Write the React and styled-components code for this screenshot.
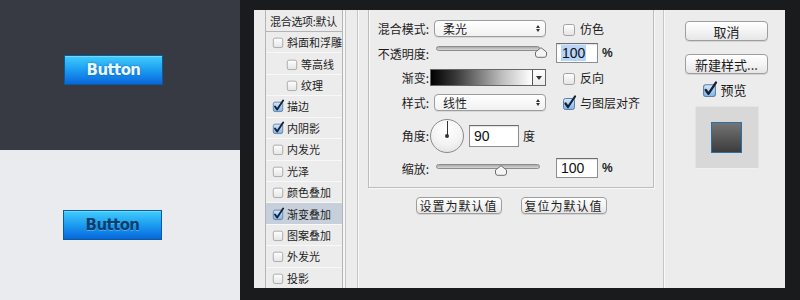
import React from 'react';
import styled, { createGlobalStyle } from 'styled-components';

const GlobalStyle = createGlobalStyle`
  html, body {
    margin: 0;
    padding: 0;
    background: #1a1b1d;
  }
  * {
    box-sizing: border-box;
  }
`;

const cjk = `"Noto Sans CJK SC", "Noto Sans", sans-serif`;

const Page = styled.div`
  width: 800px;
  height: 300px;
  display: flex;
  overflow: hidden;
  font-family: ${cjk};
  color: #1c1c1c;
`;

// left demo panels
const DemoColumn = styled.div`
  width: 240px;
  display: flex;
  flex-direction: column;
`;

const DemoHalf = styled.div`
  height: 150px;
  display: flex;
  align-items: flex-start;
  background: ${p => p.$bg};
  padding: ${p => p.$pad};
`;

const GlossButton = styled.div`
  width: 99px;
  height: 30px;
  display: flex;
  align-items: center;
  justify-content: center;
  border: 1px solid #0b5b9b;
  background: linear-gradient(to bottom, #41cdfc 0%, #1c9cf0 50%, #0766dc 100%);
  box-shadow: inset 0 1px 0 rgba(255, 255, 255, 0.25);
  font-family: "DejaVu Sans", Verdana, sans-serif;
  font-weight: bold;
  font-size: 15px;
  letter-spacing: -0.6px;
  color: ${p => (p.$dark ? '#0a3f6e' : '#eaf6ff')};
  text-shadow: ${p => (p.$dark ? '0 1px 0 rgba(120, 210, 255, 0.5)' : '0 0 2px rgba(0, 60, 140, 0.6)')};
`;

// dialog
const Stage = styled.div`
  flex: 1;
  display: flex;
  padding: 10px 15px 12px 14px;
  background: #1a1b1d;
`;

const Dialog = styled.div`
  flex: 1;
  display: flex;
  background: #ececec;
  overflow: hidden;
`;

const StyleList = styled.div`
  width: 78px;
  margin-left: 11px;
  display: flex;
  flex-direction: column;
  border-left: 1px solid #b4b4b4;
  border-right: 1px solid #b4b4b4;
  box-shadow: 2px 0 0 #f6f6f6, 3px 0 0 #c4c4c4;
`;

const ListHeader = styled.div`
  height: 22px;
  display: flex;
  align-items: center;
  padding-left: 4px;
  font-size: 11px;
  letter-spacing: -0.3px;
  white-space: nowrap;
  border-bottom: 1px solid #b4b4b4;
`;

const ListItem = styled.div`
  flex: 1;
  display: flex;
  align-items: center;
  gap: 3px;
  padding-left: ${p => (p.$indent ? '20px' : '6px')};
  font-size: 11px;
  white-space: nowrap;
  border-bottom: 1px solid #f8f8f8;
  background: ${p => (p.$active ? '#c7d0da' : 'transparent')};
  &:last-child {
    border-bottom: none;
  }
`;

const Divider = styled.div`
  width: 2px;
  margin-left: ${p => p.$ml}px;
  border-left: 1px solid #c6c6c6;
  background: #f9f9f9;
`;

const Middle = styled.div`
  width: 304px;
  display: flex;
  flex-direction: column;
`;

const GroupBox = styled.div`
  width: 286px;
  height: 178px;
  margin-left: 9px;
  border: 1px solid #bcbcbc;
  border-top: none;
  box-shadow: inset 1px 0 0 #f8f8f8, 1px 1px 0 #f8f8f8;
  display: flex;
  flex-direction: column;
`;

const Row = styled.div`
  display: grid;
  grid-template-columns: 61px 126px auto;
  align-items: center;
  height: ${p => p.$h}px;
  margin-top: ${p => p.$mt}px;
`;

const Label = styled.span`
  text-align: right;
  font-size: 12px;
  padding-right: 1px;
  white-space: nowrap;
`;

const SelectBox = styled.div`
  width: 112px;
  height: 17px;
  margin-left: 4px;
  display: flex;
  align-items: center;
  justify-content: space-between;
  padding: 0 5px 0 8px;
  border: 1px solid #9c9c9c;
  border-radius: 4px;
  background: linear-gradient(to bottom, #ffffff, #f1f1f1);
  box-shadow: 0 1px 0 rgba(0, 0, 0, 0.08);
  font-size: 12px;
`;

const Arrows = styled.span`
  display: flex;
  flex-direction: column;
  align-items: center;
  gap: 1px;
  &::before,
  &::after {
    content: '';
    border-left: 2.5px solid transparent;
    border-right: 2.5px solid transparent;
  }
  &::before {
    border-bottom: 3px solid #333;
  }
  &::after {
    border-top: 3px solid #333;
  }
`;

const CheckRow = styled.div`
  display: flex;
  align-items: center;
  gap: 4px;
  margin-left: 6px;
  font-size: 12px;
  white-space: nowrap;
`;

const ValueRow = styled.div`
  display: flex;
  align-items: center;
  gap: 4px;
  font-size: 12px;
`;

const NumField = styled.div`
  width: ${p => p.$w}px;
  height: ${p => p.$h}px;
  display: flex;
  align-items: center;
  padding-left: 4px;
  background: #fff;
  border: 1px solid #8e8e8e;
  border-top-color: #6e6e6e;
  box-shadow: inset 0 1px 1px rgba(0, 0, 0, 0.12);
  font-family: "Liberation Sans", Arial, sans-serif;
  font-size: 14px;
  color: #111;
`;

const Selected = styled.span`
  background: #b7d5fb;
  padding: 0 1px;
`;

const Unit = styled.span`
  font-family: "Liberation Sans", Arial, sans-serif;
  font-weight: bold;
  font-size: 12px;
`;

const SliderWrap = styled.div`
  position: relative;
  width: 110px;
  height: 100%;
  margin-left: 6px;
`;

const Track = styled.div`
  margin-top: ${p => p.$top}px;
  width: 104px;
  height: 5px;
  border-radius: 3px;
  border: 1px solid #8c8c8c;
  background: linear-gradient(to bottom, #a9a9a9, #d8d8d8);
`;

const Thumb = styled.svg`
  position: absolute;
  top: ${p => p.$top}px;
`;

const GradientField = styled.div`
  width: 116px;
  height: 17px;
  display: flex;
  border: 1px solid #666;
`;

const GradientSwatch = styled.div`
  flex: 1;
  border-right: 1px solid #555;
  background: linear-gradient(to right, #000 0%, #3a3a3a 25%, #bdbdbd 70%, #fff 100%);
`;

const DropTab = styled.div`
  width: 12px;
  display: flex;
  align-items: center;
  justify-content: center;
  background: linear-gradient(to bottom, #fff, #ececec);
  &::after {
    content: '';
    border-left: 3px solid transparent;
    border-right: 3px solid transparent;
    border-top: 4px solid #333;
  }
`;

const AngleCell = styled.div`
  grid-column: 2 / span 2;
  display: flex;
  align-items: center;
  gap: 4px;
  font-size: 12px;
`;

const Dial = styled.div`
  position: relative;
  width: 34px;
  height: 34px;
  border-radius: 50%;
  border: 1px solid #8a8a8a;
  background: radial-gradient(circle at 50% 30%, #ffffff 0%, #f3f3f3 55%, #dcdcdc 100%);
  margin-right: 1px;
  &::before {
    content: '';
    position: absolute;
    left: 15.5px;
    top: 1px;
    width: 1px;
    height: 15px;
    background: #333;
  }
  &::after {
    content: '';
    position: absolute;
    left: 14px;
    top: 14px;
    width: 4px;
    height: 4px;
    border-radius: 50%;
    background: #333;
  }
`;

const FooterButtons = styled.div`
  display: flex;
  justify-content: center;
  gap: 19px;
  margin-top: 9px;
`;

const MacButton = styled.div`
  width: ${p => p.$w}px;
  height: ${p => p.$h}px;
  display: flex;
  align-items: center;
  justify-content: center;
  border: 1px solid #9e9e9e;
  border-radius: 4px;
  background: linear-gradient(to bottom, #ffffff 0%, #f4f4f4 50%, #e6e6e6 100%);
  box-shadow: 0 1px 0 rgba(0, 0, 0, 0.1);
  font-size: ${p => p.$fs}px;
  letter-spacing: ${p => p.$ls || 0}px;
  white-space: nowrap;
`;

const RightCol = styled.div`
  flex: 1;
  display: flex;
  flex-direction: column;
  align-items: center;
  padding: 11px 0 0 3px;
  gap: 13px;
`;

const PreviewCheck = styled.div`
  display: flex;
  align-items: center;
  gap: 3px;
  margin-top: -7px;
  margin-left: -4px;
  font-size: 13px;
`;

const PreviewFrame = styled.div`
  width: 64px;
  height: 63px;
  margin-top: -6px;
  display: flex;
  align-items: center;
  justify-content: center;
  background: #d8d8d8;
  border: 1px solid #e4e4e4;
  border-bottom-color: #f0f0f0;
`;

const PreviewSwatch = styled.div`
  width: 31px;
  height: 31px;
  border: 1px solid #2c6ea6;
  background: linear-gradient(to bottom, #747474, #3c3c3c);
`;

const CheckBox = ({ checked, size = 11 }) => (
  <svg width={size + 3} height={size + 3} viewBox="0 0 14 14" style={{ flexShrink: 0, overflow: 'visible' }}>
    <defs>
      <linearGradient id="cbOff" x1="0" y1="0" x2="0" y2="1">
        <stop offset="0" stopColor="#ffffff" />
        <stop offset="1" stopColor="#e4e4e4" />
      </linearGradient>
      <linearGradient id="cbOn" x1="0" y1="0" x2="0" y2="1">
        <stop offset="0" stopColor="#d6e9fb" />
        <stop offset="1" stopColor="#7fb3e6" />
      </linearGradient>
    </defs>
    <rect x="1.5" y="2.5" width="11" height="11" rx="2" fill={checked ? 'url(#cbOn)' : 'url(#cbOff)'} stroke={checked ? '#5b7ea6' : '#a2a2a2'} />
    {checked && (
      <path d="M3.5 7.5 L6 11 L13 0.5" fill="none" stroke="#142238" strokeWidth="2.2" strokeLinecap="round" strokeLinejoin="round" />
    )}
  </svg>
);

const SliderThumb = ({ left, top }) => (
  <Thumb $top={top} width="14" height="11" viewBox="0 0 14 11" style={{ left }}>
    <path d="M7 0.7 L12.5 5 L12.5 8 Q12.5 10.3 10.2 10.3 L3.8 10.3 Q1.5 10.3 1.5 8 L1.5 5 Z" fill="#f4f4f4" stroke="#6f6f6f" />
  </Thumb>
);

const Slider = ({ thumb, trackTop }) => (
  <SliderWrap>
    <Track $top={trackTop} />
    <SliderThumb left={thumb} top={trackTop + 1} />
  </SliderWrap>
);

const styles = [
  { name: '斜面和浮雕' },
  { name: '等高线', indent: true },
  { name: '纹理', indent: true },
  { name: '描边', checked: true },
  { name: '内阴影', checked: true },
  { name: '内发光' },
  { name: '光泽' },
  { name: '颜色叠加' },
  { name: '渐变叠加', checked: true, active: true },
  { name: '图案叠加' },
  { name: '外发光' },
  { name: '投影' },
];

const App = () => (
  <Page>
    <GlobalStyle />
    <DemoColumn>
      <DemoHalf $bg="#383a43" $pad="55px 0 0 64px">
        <GlossButton>Button</GlossButton>
      </DemoHalf>
      <DemoHalf $bg="#e9ebef" $pad="60px 0 0 63px">
        <GlossButton $dark>Button</GlossButton>
      </DemoHalf>
    </DemoColumn>

    <Stage>
      <Dialog>
        <StyleList>
          <ListHeader>混合选项:默认</ListHeader>
          {styles.map(s => (
            <ListItem key={s.name} $indent={s.indent} $active={s.active}>
              <CheckBox checked={s.checked} size={9} />
              {s.name}
            </ListItem>
          ))}
        </StyleList>

        <Divider $ml={14} />

        <Middle>
          <GroupBox>
            <Row $h={17} $mt={10}>
              <Label>混合模式:</Label>
              <SelectBox>
                柔光
                <Arrows />
              </SelectBox>
              <CheckRow>
                <CheckBox />
                仿色
              </CheckRow>
            </Row>

            <Row $h={20} $mt={6}>
              <Label>不透明度:</Label>
              <Slider thumb={98} trackTop={3} />
              <ValueRow>
                <NumField $w={42} $h={20}>
                  <Selected>100</Selected>
                </NumField>
                <Unit>%</Unit>
              </ValueRow>
            </Row>

            <Row $h={17} $mt={6}>
              <Label>渐变:</Label>
              <GradientField>
                <GradientSwatch />
                <DropTab />
              </GradientField>
              <CheckRow>
                <CheckBox />
                反向
              </CheckRow>
            </Row>

            <Row $h={17} $mt={8}>
              <Label>样式:</Label>
              <SelectBox>
                线性
                <Arrows />
              </SelectBox>
              <CheckRow>
                <CheckBox checked />
                与图层对齐
              </CheckRow>
            </Row>

            <Row $h={35} $mt={7}>
              <Label>角度:</Label>
              <AngleCell>
                <Dial />
                <NumField $w={50} $h={22}>90</NumField>
                度
              </AngleCell>
            </Row>

            <Row $h={20} $mt={5}>
              <Label>缩放:</Label>
              <Slider thumb={58} trackTop={6} />
              <ValueRow>
                <NumField $w={42} $h={20}>100</NumField>
                <Unit>%</Unit>
              </ValueRow>
            </Row>
          </GroupBox>

          <FooterButtons>
            <MacButton $w={86} $h={17} $fs={12} $ls={1}>设置为默认值</MacButton>
            <MacButton $w={86} $h={17} $fs={12} $ls={1}>复位为默认值</MacButton>
          </FooterButtons>
        </Middle>

        <Divider $ml={0} />

        <RightCol>
          <MacButton $w={83} $h={20} $fs={13}>取消</MacButton>
          <MacButton $w={83} $h={20} $fs={13}>新建样式...</MacButton>
          <PreviewCheck>
            <CheckBox checked size={12} />
            预览
          </PreviewCheck>
          <PreviewFrame>
            <PreviewSwatch />
          </PreviewFrame>
        </RightCol>
      </Dialog>
    </Stage>
  </Page>
);

export default App;
